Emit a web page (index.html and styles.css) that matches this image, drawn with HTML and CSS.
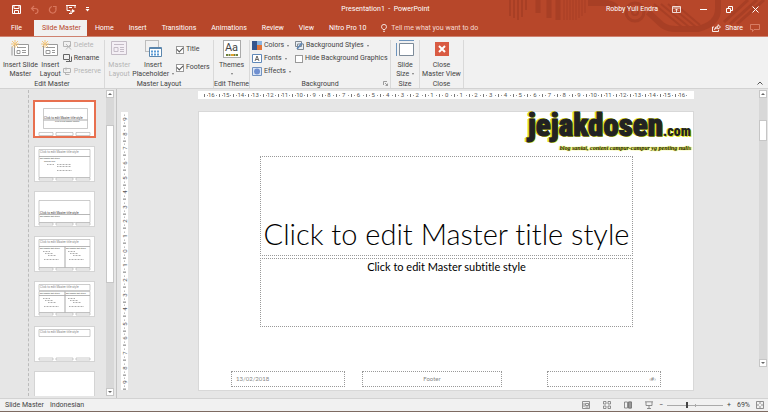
FILE: index.html
```html
<!DOCTYPE html>
<html lang="en">
<head>
    <meta charset="UTF-8">
    <meta name="viewport" content="width=device-width, initial-scale=1.0">
    <title>Presentation1 - PowerPoint</title>
    <link rel="stylesheet" href="styles.css">
</head>
<body>
    <header class="top">
        <svg class="pattern" viewBox="0 0 278 36" width="278" height="36" fill="none" stroke="#9f3a22">
            <path d="M20 0v16M24 0v18M28 0v20M32 0v17M36 0v10" stroke-width="2"/>
            <path d="M48 0v13M59 0v18M68 0v20" stroke-width="5"/>
            <path d="M74 0v20M77 0v20M80 0v20M83 0v20M86 0v20M89 0v18M92 0v16M95 0v13" stroke-width="1"/>
            <path d="M98 3h16q8 0 12 4" stroke-width="6"/>
            <circle cx="145" cy="12" r="9" stroke-width="3"/>
            <circle cx="145" cy="12" r="3" stroke-width="2"/>
            <path d="M158 12l14 13q6 4 14 4h22q20-5 20-20V0" stroke-width="6"/>
            <path d="M164 4l28 23M171 4l28 23M178 4l28 23M185 4l25 21" stroke-width="2"/>
            <path d="M234 22l24-22M240 24l27-24M247 24l27-24" stroke-width="3"/>
        </svg>

        <div class="titlebar">
            <div class="quick">
                <button aria-label="Save"><svg width="9" height="9" viewBox="0 0 9 9" fill="none" stroke="#fff"><path d="M.5.5h8v8h-8z"/><path d="M2 .5v3h5v-3M2.500 8.500v-3h4v3"/></svg></button>
                <button aria-label="Undo"><svg width="9" height="9" viewBox="0 0 9 9" fill="none" stroke="#d9775d" stroke-width="1.200"><path d="M4 1L1.500 3.500 4 6M1.500 3.500H5q3 0 3 2.500T5 8.500"/></svg></button>
                <button aria-label="Redo"><svg width="9" height="9" viewBox="0 0 9 9" fill="none" stroke="#d9775d" stroke-width="1.200"><path d="M7.500 3A3.300 3.300 0 1 1 4 1.500M5 1.500h3V4"/></svg></button>
                <button aria-label="Start From Beginning"><svg width="10" height="9" viewBox="0 0 10 9" fill="none" stroke="#fff"><path d="M0 .5h10M1 1v4.500h3M9 1v2M3 8.500h3M5 5.500v3M3 2.500h3"/><path d="M6 4l3 2-3 2z" fill="#fff" stroke="none"/></svg></button>
                <button aria-label="Customize"><svg width="5" height="6" viewBox="0 0 5 6" fill="#fff"><path d="M1 1h3v1H1zM.5 3h4L2.500 5.500z"/></svg></button>
            </div>
            <h1>Presentation1 &nbsp;-&nbsp; PowerPoint</h1>
            <div class="window">
                <span>Robby Yuli Endra</span>
                <button aria-label="Ribbon Display"><svg width="9" height="7" viewBox="0 0 9 7" fill="none" stroke="#fff"><path d="M.5.5h8v6h-8zM.5 2h8M4.500 6V3M3 4.500L4.500 3 6 4.500" stroke-width=".8"/></svg></button>
                <button aria-label="Minimize"><svg width="7" height="7" viewBox="0 0 7 7" stroke="#fff"><path d="M0 3.500h7"/></svg></button>
                <button aria-label="Restore"><svg width="7" height="7" viewBox="0 0 7 7" fill="none" stroke="#fff"><path d="M.5 2.500h4v4h-4zM2.500 2V.5h4v4H5"/></svg></button>
                <button aria-label="Close"><svg width="7" height="7" viewBox="0 0 7 7" stroke="#fff"><path d="M.5.5l6 6M6.500.5l-6 6"/></svg></button>
            </div>
        </div>

        <nav class="tabs">
            <a href="#" class="file">File</a>
            <a href="#" class="active">Slide Master</a>
            <a href="#">Home</a>
            <a href="#">Insert</a>
            <a href="#">Transitions</a>
            <a href="#">Animations</a>
            <a href="#">Review</a>
            <a href="#">View</a>
            <a href="#">Nitro Pro 10</a>
            <a href="#" class="tell"><svg width="6" height="8" viewBox="0 0 6 8" fill="none" stroke="#fff" stroke-width=".8"><path d="M2 5.500Q.5 4 .5 2.800a2.500 2.400 0 0 1 5 0Q5.500 4 4 5.500zM2 7.300h2"/></svg>Tell me what you want to do</a>
            <a href="#" class="share"><svg width="9" height="8" viewBox="0 0 9 8" fill="none" stroke="#fff" stroke-width=".9"><path d="M2 3H.5v4.500h6V6M2.500 5.500Q3 2.500 6 2.500V.7L8.500 3 6 5.200V3.800Q4 3.800 2.500 5.500z"/></svg>Share</a>
            <button aria-label="Comments"><svg width="10" height="8" viewBox="0 0 10 8" fill="none" stroke="#e08a72" stroke-width=".8"><path d="M.5.5h9v5H4L2.500 7.500v-2h-2z"/></svg></button>
        </nav>
    </header>

    <section class="ribbon">
        <div class="group edit-master">
            <div class="tools">
                <button class="big"><svg width="18" height="17" viewBox="0 0 18 17" fill="none" stroke="#999"><path d="M3.500 4.500h14v11h-14z" fill="#fff"/><path d="M2 6.500H1v9M6 7.500h9M6 10.500h3v3H6zM11 10.500h4M11 12.500h4"/><path d="M4 0v8M0 4h8M1 1l6 6M7 1L1 7" stroke="#f3c67c"/></svg>Insert Slide<br>Master</button>
                <button class="big"><svg width="18" height="17" viewBox="0 0 18 17" fill="none" stroke="#999"><path d="M2.500 4.500h14v11h-14z" fill="#fff"/><path d="M5 7.500h9M5 10.500h4v3H5zM11 10.500h3M11 12.500h3"/><path d="M4 0v8M0 4h8M1 1l6 6M7 1L1 7" stroke="#f3c67c"/></svg>Insert<br>Layout</button>
                <div class="stack">
                    <button disabled><svg width="9" height="9" viewBox="0 0 9 9" fill="none" stroke="#b5b5b5"><path d="M.5.5h7v5h-7zM3 3l5 5.500M8 3L3 8.500"/></svg>Delete</button>
                    <button><svg width="9" height="9" viewBox="0 0 9 9" fill="none" stroke="#666"><path d="M.5.5h6v5h-6zM3 7.500h5.500v-5M5 5l3 3"/></svg>Rename</button>
                    <button disabled><svg width="9" height="9" viewBox="0 0 9 9" fill="none" stroke="#b5b5b5"><path d="M.5 1.500h7v4h-7zM2.500 5.500v2h4M3 .5v3"/></svg>Preserve</button>
                </div>
            </div>
            <h2>Edit Master</h2>
        </div>

        <div class="group master-layout">
            <div class="tools">
                <button class="big" disabled><svg width="18" height="17" viewBox="0 0 18 17" fill="none" stroke="#c4bcc6"><path d="M1.500 1.500h15v13h-15z" fill="#f4eff5"/><path d="M4 4.500h10M4 7.500h4v4H4zM10 7.500h4M10 9.500h4M10 11.500h4"/></svg>Master<br>Layout</button>
                <button class="big"><svg width="18" height="17" viewBox="0 0 18 17" fill="none" stroke="#888"><path d="M1.500.5h13v11h-13z" stroke-dasharray="1 1"/><path d="M5.500 7.500h12v9h-12z" fill="#fff" stroke="#5b86ad"/><path d="M6 8.500h11" stroke="#5b86ad"/><path d="M7 11.500h9M7 14.500h9" stroke="#5b9bd5" stroke-width="2" stroke-dasharray="2 1"/></svg>Insert<br>Placeholder <i class="caret"></i></button>
                <div class="checks">
                    <label><input type="checkbox" checked>Title</label>
                    <label><input type="checkbox" checked>Footers</label>
                </div>
            </div>
            <h2>Master Layout</h2>
        </div>

        <div class="group edit-theme">
            <div class="tools">
                <button class="big"><span class="theme">Aa<svg width="12" height="2" viewBox="0 0 12 2"><path d="M0 1h12" stroke="#70803a" stroke-width="2" stroke-dasharray="2 .5"/><path d="M5 1h3" stroke="#e0a030" stroke-width="2"/></svg></span>Themes<br><i class="caret"></i></button>
            </div>
            <h2>Edit Theme</h2>
        </div>

        <div class="group background">
            <div class="tools">
                <div class="stack">
                    <button><svg width="10" height="9" viewBox="0 0 10 9"><path d="M0 0h5v9H0z" fill="#35558d"/><path d="M5 0h5v4H5z" fill="#8ab4e0"/><path d="M5 4h5v5H5z" fill="#e0743a"/></svg>Colors <i class="caret"></i></button>
                    <button><svg width="10" height="9" viewBox="0 0 10 9" fill="none" stroke="#5f88b8"><path d="M.5.5h9v8h-9z" fill="#fff"/><path d="M3 7l2-5 2 5M4 5.500h2" stroke="#444" stroke-width=".8"/></svg>Fonts <i class="caret"></i></button>
                    <button><svg width="10" height="9" viewBox="0 0 10 9"><path d="M.5.5h9v8h-9z" fill="#dbe6f5" stroke="#7292c0"/><circle cx="5" cy="4.500" r="3" fill="#6f8fd0"/></svg>Effects <i class="caret"></i></button>
                </div>
                <div class="stack">
                    <button><svg width="9" height="9" viewBox="0 0 9 9" fill="none" stroke="#808890"><path d="M.5.5h6v5h-6zM2.500 3h6v5.500h-6z" fill="#e8eef4"/><path d="M2 8l5-6" stroke="#5f88b8" stroke-width="1.500"/></svg>Background Styles <i class="caret"></i></button>
                    <label><input type="checkbox">Hide Background Graphics</label>
                </div>
            </div>
            <h2>Background</h2>
            <button class="launcher" aria-label="Format Background"><svg width="5" height="5" viewBox="0 0 5 5" fill="none" stroke="#888" stroke-width=".8"><path d="M.5 4V.5H4M2 2l2.500 2.500M4.500 2.500v2h-2"/></svg></button>
        </div>

        <div class="group size">
            <div class="tools">
                <button class="big"><svg width="18" height="17" viewBox="0 0 18 17" fill="none" stroke="#7d8b99"><path d="M3.500 3.500h14v12h-14z" fill="#fff"/><path d="M3 .5h15M.5 3v13" stroke="#6d94bd"/></svg>Slide<br>Size <i class="caret"></i></button>
            </div>
            <h2>Size</h2>
        </div>

        <div class="group close">
            <div class="tools">
                <button class="big"><svg width="18" height="17" viewBox="0 0 18 17"><path d="M2 2h14v14H2z" fill="#d95b43"/><path d="M6 6l6 6M12 6l-6 6" stroke="#fff" stroke-width="2"/></svg>Close<br>Master View</button>
            </div>
            <h2>Close</h2>
        </div>
        <button class="collapse" aria-label="Collapse Ribbon"><svg width="6" height="4" viewBox="0 0 6 4" fill="none" stroke="#555"><path d="M.5 3.500L3 1l2.500 2.500"/></svg></button>
    </section>

    <main class="workspace">
        <aside class="pane">
            <div class="thumbs">
                <button class="thumb selected" aria-label="Title Slide Layout"><svg viewBox="0 0 59 34"><path class="box" d="M8.500 6.500h44v11.500h-44zM8.500 18h44v8.500h-44zM4 30.500h14v3H4zM21 30.500h17v3H21zM41 30.500h14v3H41z"/><text x="9" y="17">Click to edit Master title style</text><text class="small" x="20" y="20">Click to edit Master subtitle</text></svg></button>
                <button class="thumb" aria-label="Title and Content Layout"><svg viewBox="0 0 59 34"><path class="box" d="M4 2.500h51v7H4zM4 9.500h51v21H4zM4 31h14v2H4zM21 31h17v2H21zM41 31h14v2H41z"/><text class="thin" x="5" y="6">Click to edit Master title style</text><text class="small" x="5" y="12">Edit Master text styles</text><text class="small" x="9" y="15">Second level</text><path class="icons" d="M12 17.500h7M22 17.500h14M22 19.500h14M22 23.500h15"/></svg></button>
                <button class="thumb" aria-label="Section Header Layout"><svg viewBox="0 0 59 34"><path class="box" d="M4 8.500h51v14H4zM4 22.500h51v8H4zM4 31h14v2H4zM21 31h17v2H21zM41 31h14v2H41z"/><text x="5" y="21.500">Click to edit Master title style</text><text class="small" x="5" y="25">Edit Master text styles</text></svg></button>
                <button class="thumb" aria-label="Two Content Layout"><svg viewBox="0 0 59 34"><path class="box" d="M4 2.500h51v7H4zM4 9.500h26v21H4zM30 9.500h25v21H30zM4 31h14v2H4zM21 31h17v2H21zM41 31h14v2H41z"/><text class="thin" x="5" y="6">Click to edit Master title style</text><text class="small" x="5" y="12">Edit Master text styles</text><text class="small" x="31" y="12">Edit Master text styles</text><path class="icons" d="M8 14.500h7M10 16.500h8M13 18.500h8M9 22.500h15M33 14.500h7M35 16.500h8M38 18.500h8M34 22.500h15"/></svg></button>
                <button class="thumb" aria-label="Comparison Layout"><svg viewBox="0 0 59 34"><path class="box" d="M4 2.500h51v6H4zM4 9.500h26v4H4zM30 9.500h25v4H30zM4 13.500h26v17H4zM30 13.500h25v17H30zM4 31h14v2H4zM21 31h17v2H21zM41 31h14v2H41z"/><text class="thin" x="5" y="6">Click to edit Master title style</text><text class="small" x="5" y="12">Edit Master text styles</text><text class="small" x="31" y="12">Edit Master text styles</text><path class="icons" d="M8 16.500h7M10 18.500h8M13 20.500h8M9 24.500h15M33 16.500h7M35 18.500h8M38 20.500h8M34 24.500h15"/></svg></button>
                <button class="thumb" aria-label="Title Only Layout"><svg viewBox="0 0 59 34"><path class="box" d="M4 2.500h51v7H4zM4 31h14v2H4zM21 31h17v2H21zM41 31h14v2H41z"/><text class="thin" x="5" y="6">Click to edit Master title style</text></svg></button>
                <button class="thumb" aria-label="Blank Layout"><svg viewBox="0 0 59 34"></svg></button>
            </div>
            <div class="scroll">
                <button class="up" aria-label="Scroll up"></button>
                <div class="track"><div class="grip pane-grip"></div></div>
                <button class="down" aria-label="Scroll down"></button>
            </div>
        </aside>

        <ol class="ruler vertical" id="vruler"></ol>

        <section class="canvas">
            <ol class="ruler horizontal" id="hruler"></ol>
            <article class="slide">
                <div class="logo">
                    <p class="name">jejakdosen<span>.com</span></p>
                    <p class="tagline">blog santai, content campur-campur yg penting nulis</p>
                </div>
                <div class="holder title">Click to edit Master title style</div>
                <div class="holder subtitle">Click to edit Master subtitle style</div>
                <footer class="footers">
                    <div class="holder date">13/02/2018</div>
                    <div class="holder foot">Footer</div>
                    <div class="holder number">‹#›</div>
                </footer>
            </article>
        </section>

        <div class="scroll main-scroll">
            <button class="up" aria-label="Scroll up"></button>
            <div class="track"><div class="grip"></div></div>
            <button class="down" aria-label="Scroll down"></button>
        </div>
    </main>

    <footer class="status">
        <span>Slide Master</span>
        <span>Indonesian</span>
        <div class="views">
            <button aria-label="Normal"><svg width="8" height="8" viewBox="0 0 8 8" fill="none" stroke="#777" stroke-width=".8"><path d="M.5.5h7v7h-7zM2 2v4M3.500 2.500h3v2h-3zM3.500 6h3"/></svg></button>
            <button aria-label="Slide Sorter"><svg width="8" height="8" viewBox="0 0 8 8" fill="none" stroke="#777" stroke-width=".8"><path d="M.5.5h2.500v2.500H.5zM5 .5h2.500v2.500H5zM.5 5h2.500v2.500H.5zM5 5h2.500v2.500H5z"/></svg></button>
            <button aria-label="Reading View"><svg width="8" height="8" viewBox="0 0 8 8" fill="none" stroke="#777" stroke-width=".8"><path d="M.5 1h3v6h-3zM4.500 1h3v6h-3z"/><path d="M4.500 1h3v6h-3z" fill="#999"/></svg></button>
            <button aria-label="Slide Show"><svg width="8" height="8" viewBox="0 0 8 8" fill="none" stroke="#777" stroke-width=".8"><path d="M0 .8h8M1 1v3.500h6V1M4 4.500v3M2 7.500h4"/></svg></button>
        </div>
        <div class="zoom">
            <button aria-label="Zoom out">−</button>
            <input type="range" min="10" max="100" value="41" aria-label="Zoom">
            <button aria-label="Zoom in">+</button>
            <span>69%</span>
            <button aria-label="Fit to window"><svg width="8" height="8" viewBox="0 0 8 8" fill="none" stroke="#777" stroke-width=".8"><path d="M.5.5h7v7h-7zM4 1v2M4 5v2M1 4h2M5 4h2"/></svg></button>
        </div>
    </footer>

    <script>
        // Fill a ruler with numbers counting down to 0 and up again
        function buildRuler(id, max) {
            const ruler = document.getElementById(id);
            for (let i = -max; i <= max; i++) {
                const mark = document.createElement("li");
                mark.textContent = Math.abs(i);
                ruler.appendChild(mark);
            }
        }

        buildRuler("hruler", 16);
        buildRuler("vruler", 9);
    </script>
</body>
</html>
```

FILE: styles.css
```css
* {
    box-sizing: border-box;
}

body {
    margin: 0;
    height: 100vh;
    display: flex;
    flex-direction: column;
    font-family: Roboto, "Open Sans", sans-serif;
    font-size: 7px;
    line-height: 9px;
    color: #444;
    background: #e6e6e6;
    overflow: hidden;
}

h1, h2, p, ol {
    margin: 0;
    padding: 0;
    font-size: 7px;
    font-weight: normal;
}

button {
    border: none;
    background: none;
    padding: 0;
    font: inherit;
    color: inherit;
    cursor: pointer;
}

button:disabled {
    color: #b5b5b5;
}

svg {
    display: block;
    flex: none;
}

/* Title bar and tabs */
.top {
    position: relative;
    background: #b7472a;
    color: #fff;
    border-bottom: 1px solid #cf8270;
}

.pattern {
    position: absolute;
    top: 0;
    right: 0;
    opacity: 0.6;
}

.titlebar {
    position: relative;
    height: 20px;
    display: grid;
    grid-template-columns: 1fr auto 1fr;
    align-items: center;
    padding: 0 9px 2px 12px;
}

.quick, .window {
    display: flex;
    align-items: center;
}

.quick {
    gap: 9px;
}

.window {
    justify-content: flex-end;
    gap: 19px;
}

.window span {
    margin-right: -5px;
}

.tabs {
    position: relative;
    height: 16px;
    display: flex;
    align-items: stretch;
    padding-right: 8px;
}

.tabs a {
    display: flex;
    align-items: center;
    gap: 4px;
    padding: 0 7px 0 8px;
    color: #fff;
    text-decoration: none;
}

.tabs .file {
    padding: 0 12px 0 11px;
}

.tabs .active {
    background: #f1f1f1;
    color: #b7472a;
    padding-right: 6px;
}

.tabs .tell {
    color: #f6d9d1;
}

.tabs .share {
    margin-left: auto;
}

/* Ribbon */
.ribbon {
    display: flex;
    background: #f1f1f1;
    border-bottom: 1px solid #d2d2d2;
    height: 52px;
    padding-top: 3px;
}

.group {
    position: relative;
    display: flex;
    flex-direction: column;
    flex: none;
    border-right: 1px solid #d9d9d9;
}

.group h2 {
    text-align: center;
    line-height: 8px;
    white-space: nowrap;
}

.tools {
    flex: 1;
    min-height: 0;
    display: flex;
    justify-content: center;
    align-items: flex-start;
}

.edit-theme h2 {
    display: flex;
    justify-content: center;
}

.big {
    display: flow-root;
    text-align: center;
    white-space: nowrap;
    line-height: 9px;
}

.big svg, .theme {
    margin: 0 auto 4px;
}

.theme svg {
    margin: 0 auto;
}

.theme {
    display: block;
    width: 18px;
    height: 18px;
    background: #fff;
    border: 1px solid #aaa;
    font-size: 11px;
    line-height: 13px;
}

.edit-theme .theme {
    margin-bottom: 3px;
}

.stack {
    display: flex;
    flex-direction: column;
    gap: 4px;
    padding-top: 1px;
}

.stack button, .stack label, .checks label {
    display: flex;
    align-items: center;
    gap: 2px;
    white-space: nowrap;
}

.caret {
    display: inline-block;
    border: 1px solid transparent;
    border-top: 2px solid #777;
    border-bottom: none;
    margin-left: 1px;
    vertical-align: middle;
}

input[type="checkbox"] {
    appearance: none;
    width: 8px;
    height: 8px;
    margin: 0;
    border: 1px solid #999;
    background: #fff;
}

input[type="checkbox"]:checked::before {
    content: "";
    display: block;
    width: 5px;
    height: 3px;
    border: solid #555;
    border-width: 0 0 1px 1px;
    transform: rotate(-45deg);
}

.checks {
    display: flex;
    flex-direction: column;
    gap: 9px;
    padding-top: 5px;
}

.edit-master {
    width: 105px;
}

.edit-master .tools {
    gap: 2px;
}

.master-layout {
    width: 109px;
}

.master-layout .tools {
    gap: 2px;
}

.edit-theme {
    width: 36px;
}

.background {
    width: 141px;
}

.background .tools {
    gap: 4px;
    justify-content: flex-start;
    padding-left: 2px;
}

.size {
    width: 29px;
}

.close {
    width: 44px;
}

.launcher {
    position: absolute;
    right: 2px;
    bottom: 2px;
}

.collapse {
    margin: auto 5px 3px auto;
}

/* Workspace */
.workspace {
    flex: 1;
    min-height: 0;
    display: flex;
}

.pane {
    width: 117px;
    flex: none;
    display: flex;
    justify-content: space-between;
    border-right: 1px solid #c3c3c3;
    padding: 1px 2px 2px 28px;
}

.thumbs {
    display: flex;
    flex-direction: column;
    gap: 11px;
    padding: 12px 3px 0 6px;
    border-left: 1px dashed #bbb;
    overflow: hidden;
}

.thumb {
    width: 59px;
    flex: none;
    background: #fff;
    outline: 1px solid #d4d4d4;
}

.thumb svg {
    width: 100%;
}

.thumb.selected {
    outline: 2px solid #e8704f;
}

.thumb text {
    font-size: 3px;
    fill: #444;
}

.thumb .thin {
    fill: #888;
}

.thumb .small {
    font-size: 2px;
}

.box {
    fill: none;
    stroke: #aaa;
    stroke-width: 0.6;
}

.icons {
    stroke: #999;
    stroke-width: 0.8;
    stroke-dasharray: 1 0.5;
}

.scroll {
    width: 8px;
    flex: none;
    display: flex;
    flex-direction: column;
}

.scroll button {
    height: 8px;
    background: #fff;
    border: 1px solid #c6c6c6;
    display: grid;
    place-items: center;
}

.scroll button::before {
    content: "";
    border: 2px solid transparent;
}

.scroll .up::before {
    border-top: none;
    border-bottom-color: #666;
}

.scroll .down::before {
    border-bottom: none;
    border-top-color: #666;
}

.track {
    flex: 1;
    background: #d8d8d8;
    padding-top: 22px;
}

.grip {
    height: 21px;
    background: #fff;
    border: 1px solid #c6c6c6;
}

.pane-grip {
    height: 60%;
}

.track:has(.pane-grip) {
    padding-top: 27px;
}

.main-scroll {
    margin: 1px 1px 31px 0;
}

/* Rulers */
.ruler {
    display: flex;
    list-style: none;
    background: #fff;
    font-size: 6px;
    line-height: 8px;
    color: #555;
}

.ruler li {
    flex: 1;
    min-width: 0;
    min-height: 0;
    display: flex;
    justify-content: center;
    align-items: center;
    background:
        linear-gradient(#777, #777) left center / 1px 3px no-repeat,
        linear-gradient(#999, #999) 3px center / 1px 1px no-repeat,
        linear-gradient(#999, #999) right 2px center / 1px 1px no-repeat;
}

.horizontal {
    height: 8px;
    padding: 0 5px 0 6px;
}

.vertical {
    flex-direction: column;
    flex: none;
    width: 7px;
    margin: 23px 0 8px 4px;
}

.vertical li {
    writing-mode: vertical-rl;
    rotate: 180deg;
    background:
        linear-gradient(#777, #777) center top / 3px 1px no-repeat,
        linear-gradient(#999, #999) center 3px / 1px 1px no-repeat,
        linear-gradient(#999, #999) center bottom 3px / 1px 1px no-repeat;
}

/* Slide */
.canvas {
    flex: 1;
    min-width: 0;
    display: flex;
    flex-direction: column;
    gap: 12px;
    padding: 2px 65px 7px 70px;
}

.slide {
    flex: 1;
    display: flex;
    flex-direction: column;
    background: #fff;
    border: 1px solid #d8d8d8;
    padding: 0 32px 3px;
    font-family: Lato, "Open Sans", sans-serif;
    font-variant-ligatures: none;
    color: #000;
}

.holder {
    border: 1px dotted #999;
}

.logo {
    height: 44px;
    align-self: flex-end;
    margin-right: -30px;
    text-align: right;
    white-space: nowrap;
    color: #222;
}

.name {
    font-family: "Roboto Condensed", Roboto, sans-serif;
    font-size: 31px;
    font-weight: 900;
    line-height: 27px;
    -webkit-text-stroke: 1px #222;
    text-shadow: -2px 0 #d9e021, 1px 1px #d9e021, -1px -1px #d9e021;
}

.name span {
    font-size: 14px;
    -webkit-text-stroke: 0;
    text-shadow: -1px 0 #d9e021, 1px 1px #d9e021;
}

.tagline {
    font-family: "Liberation Serif", serif;
    font-size: 6px;
    font-style: italic;
    font-weight: bold;
    line-height: 6px;
    text-shadow: 0 0 1px #d9e021, 1px 0 1px #d9e021, -1px 0 1px #d9e021;
}

.title {
    flex: 100;
    margin: 0 28px 2px 29px;
    display: flex;
    justify-content: center;
    align-items: flex-end;
    font-size: 29px;
    font-weight: 300;
    line-height: 42px;
    white-space: nowrap;
}

.subtitle {
    flex: 69;
    margin: 0 28px 44px 29px;
    text-align: center;
    font-size: 11px;
    line-height: 16px;
}

.footers {
    display: grid;
    grid-template-columns: 114fr 141fr 142fr;
    gap: 17px;
    font-size: 6px;
    line-height: 14px;
    color: #888;
}

.footers .holder {
    padding: 0 4px;
}

.foot {
    text-align: center;
}

.number {
    margin-left: 28px;
    text-align: right;
}

/* Status bar */
.status {
    height: 14px;
    display: flex;
    align-items: center;
    gap: 6px;
    padding: 0 4px 0 5px;
    background: #f1f1f1;
    border-top: 1px solid #d2d2d2;
    border-bottom: 1px solid #7d6a62;
}

.views {
    margin-left: auto;
    display: flex;
    gap: 13px;
}

.zoom {
    display: flex;
    align-items: center;
    gap: 4px;
}

.zoom span {
    margin: 0 2px;
}

.zoom input {
    appearance: none;
    width: 56px;
    height: 8px;
    margin: 0;
    background: linear-gradient(#aaa, #aaa) center / 100% 1px no-repeat,
        linear-gradient(#aaa, #aaa) center / 1px 3px no-repeat;
}

.zoom input::-webkit-slider-thumb {
    appearance: none;
    width: 2px;
    height: 6px;
    background: #444;
}
```
